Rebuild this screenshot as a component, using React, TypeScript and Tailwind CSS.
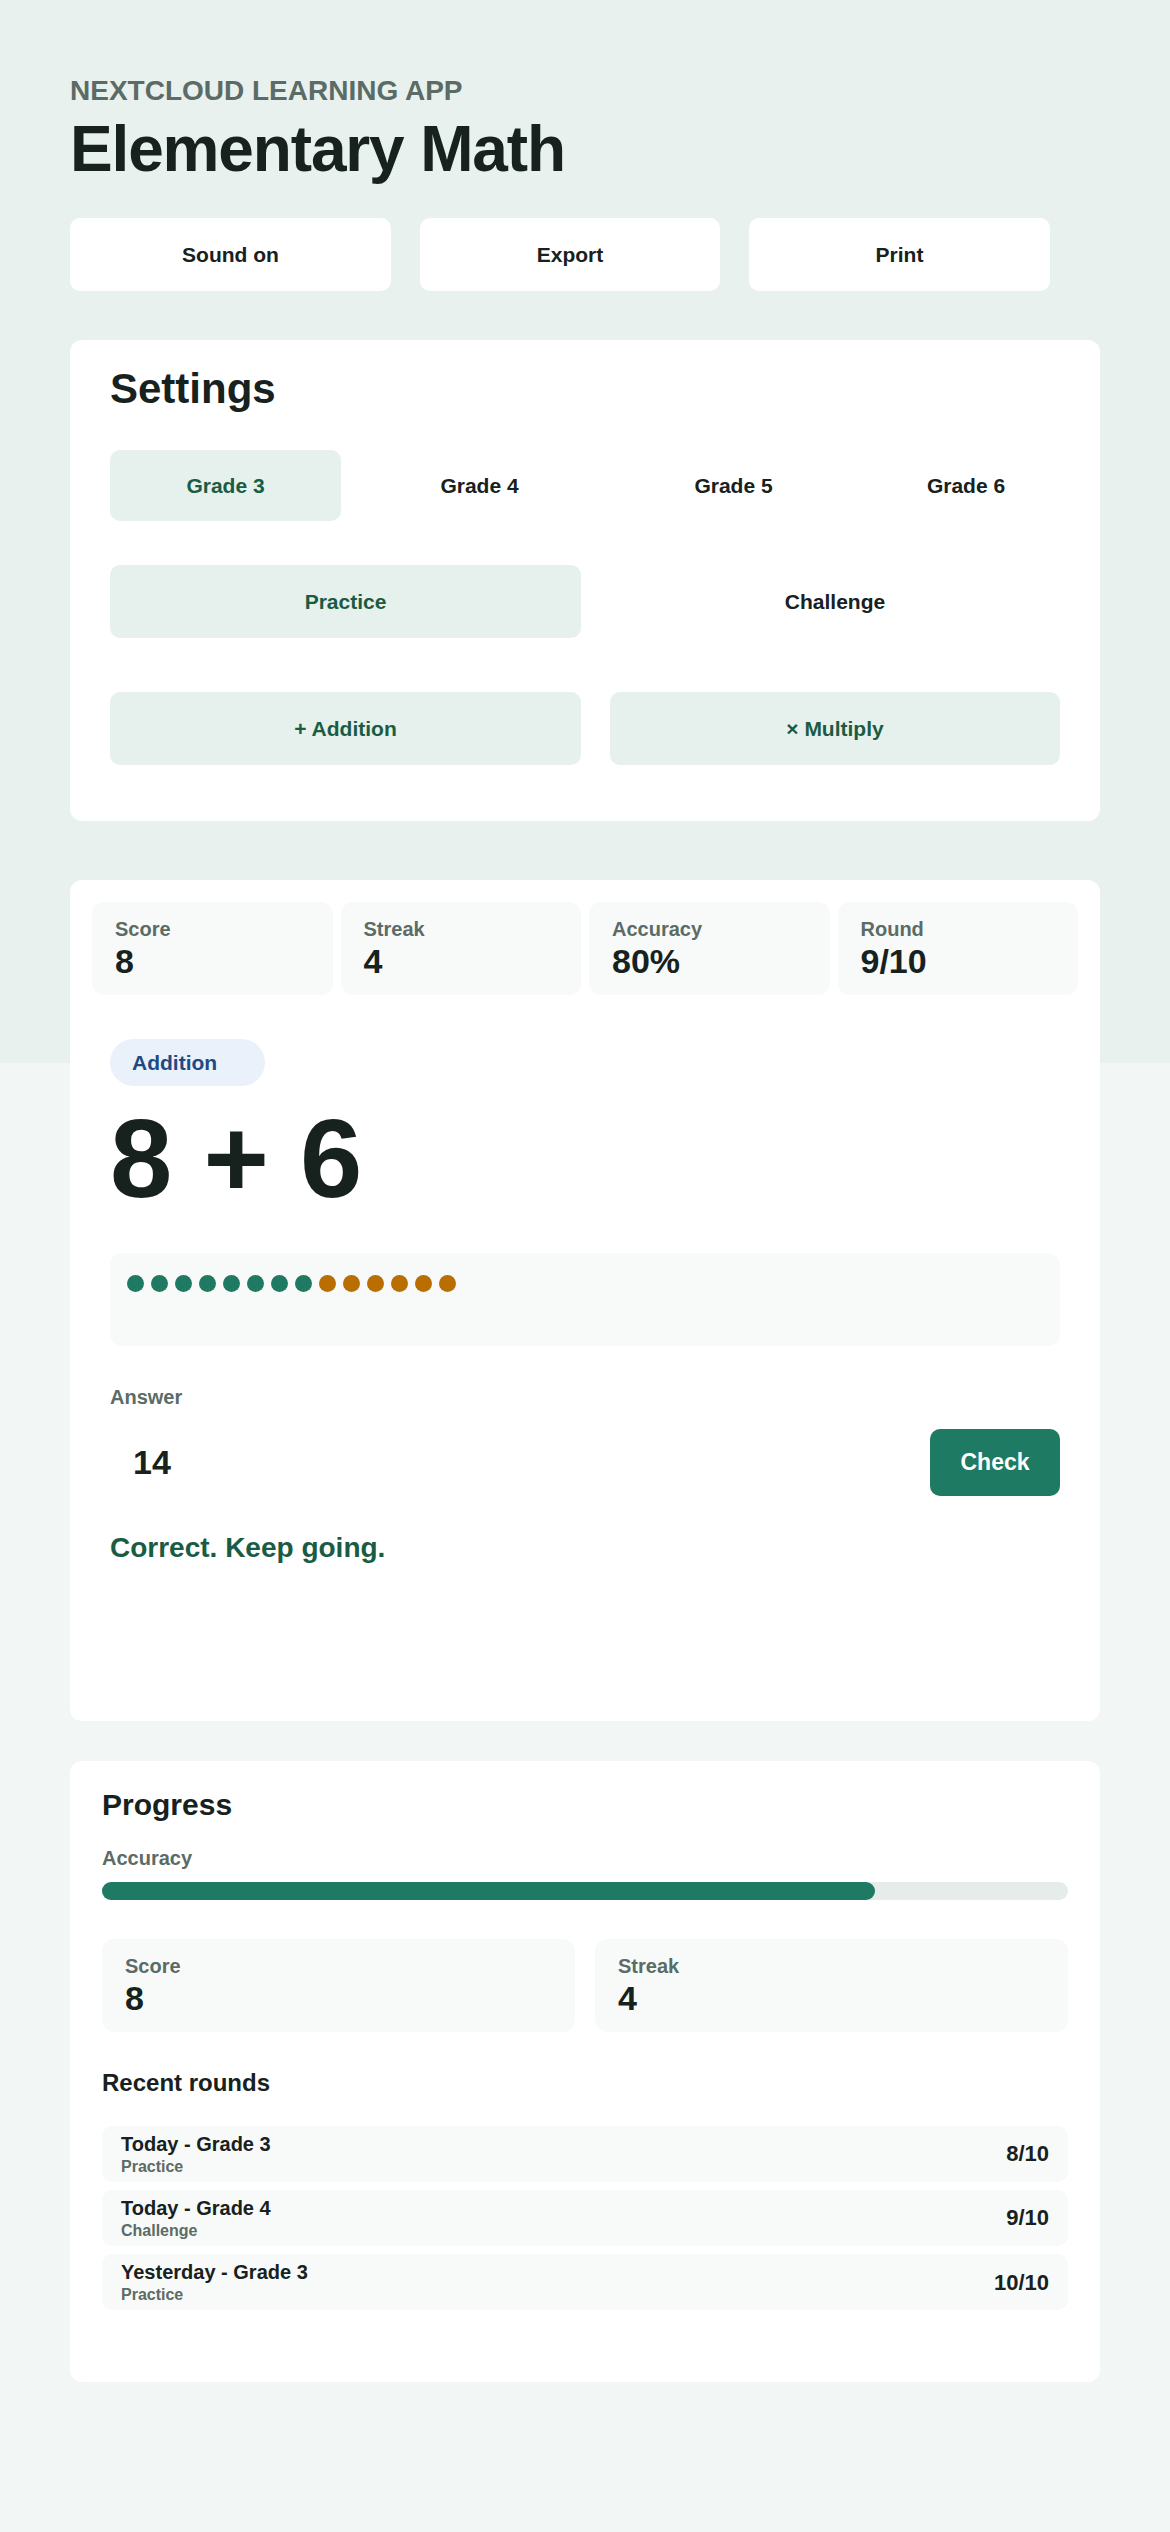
import React, { useState } from 'react';

type Round = { title: string; mode: string; score: string };

const grades = ['Grade 3', 'Grade 4', 'Grade 5', 'Grade 6'];

const recentRounds: Round[] = [
  { title: 'Today - Grade 3', mode: 'Practice', score: '8/10' },
  { title: 'Today - Grade 4', mode: 'Challenge', score: '9/10' },
  { title: 'Yesterday - Grade 3', mode: 'Practice', score: '10/10' },
];

// 8 answered right, 6 still to go
const dots = [...Array(8).fill('done'), ...Array(6).fill('todo')] as string[];

function StatTile({ label, value }: { label: string; value: string }) {
  return (
    <div className="rounded-xl bg-[#f8faf9] px-[23px] pt-[15px] pb-[14px]">
      <div className="text-[20px] font-bold leading-6 text-[#5b6b65]">{label}</div>
      <div className="mt-[2px] text-[34px] font-bold leading-[1.1] text-[#17211d]">{value}</div>
    </div>
  );
}

function ToggleButton({
  label,
  active,
  className = '',
  onClick,
}: {
  label: string;
  active: boolean;
  className?: string;
  onClick?: () => void;
}) {
  return (
    <button
      onClick={onClick}
      className={`rounded-[10px] text-[21px] font-bold ${
        active ? 'bg-[#e6f1ed] text-[#1a5c43]' : 'bg-white text-[#17211d]'
      } ${className}`}
    >
      {label}
    </button>
  );
}

function App() {
  const [grade, setGrade] = useState('Grade 3');
  const [mode, setMode] = useState('Practice');
  const [answer, setAnswer] = useState('14');
  const accuracy = 80;

  return (
    <div className="min-h-screen bg-[linear-gradient(to_bottom,#e8f1ee_0px,#e8f1ee_1063px,#f2f6f5_1063px)] px-[70px] pt-[74px] pb-[120px] font-['Liberation_Sans',Arial,sans-serif] text-[#17211d]">
      <header>
        <p className="text-[28px] font-bold leading-[1.2] text-[#5b6b65]">NEXTCLOUD LEARNING APP</p>
        <h1 className="mt-[6px] text-[64px] font-bold leading-[1.1] tracking-[-0.018em]">Elementary Math</h1>
        <div className="mt-[34px] flex gap-[29px]">
          <button className="h-[73px] w-[321px] rounded-[10px] bg-white text-[21px] font-bold">Sound on</button>
          <button className="h-[73px] w-[300px] rounded-[10px] bg-white text-[21px] font-bold">Export</button>
          <button className="h-[73px] w-[301px] rounded-[10px] bg-white text-[21px] font-bold">Print</button>
        </div>
      </header>

      <section className="mt-[49px] rounded-xl bg-white px-10 pt-[24px] pb-[56px]">
        <h2 className="text-[42px] font-bold leading-[1.2]">Settings</h2>
        <div className="mt-[36px] flex gap-[23px]">
          {grades.map((g, i) => (
            <ToggleButton
              key={g}
              label={g}
              active={grade === g}
              onClick={() => setGrade(g)}
              className={`h-[71px] ${i < 3 ? 'w-[231px]' : 'flex-1'}`}
            />
          ))}
        </div>
        <div className="mt-[44px] flex gap-[29px]">
          <ToggleButton label="Practice" active={mode === 'Practice'} onClick={() => setMode('Practice')} className="h-[73px] w-[471px]" />
          <ToggleButton label="Challenge" active={mode === 'Challenge'} onClick={() => setMode('Challenge')} className="h-[73px] flex-1" />
        </div>
        <div className="mt-[54px] flex gap-[29px]">
          <ToggleButton label="+ Addition" active className="h-[73px] w-[471px]" />
          <ToggleButton label="× Multiply" active className="h-[73px] flex-1" />
        </div>
      </section>

      <section className="mt-[59px] rounded-xl bg-white px-[22px] pt-[22px] pb-[157px]">
        <div className="grid grid-cols-4 gap-2">
          <StatTile label="Score" value="8" />
          <StatTile label="Streak" value="4" />
          <StatTile label="Accuracy" value={`${accuracy}%`} />
          <StatTile label="Round" value="9/10" />
        </div>

        <div className="px-[18px]">
          <span className="mt-[44px] flex h-[47px] w-[155px] items-center rounded-full bg-[#eaf1fa] px-[22px] text-[21px] font-bold text-[#1d4a85]">
            Addition
          </span>
          <div className="mt-[17px] text-[112px] font-bold leading-none">8 + 6</div>

          <div className="mt-[38px] h-[93px] rounded-xl bg-[#f8faf9] px-[17px] pt-[22px]">
            <div className="flex gap-[7px]">
              {dots.map((d, i) => (
                <span
                  key={i}
                  className={`h-[17px] w-[17px] rounded-full ${d === 'done' ? 'bg-[#1f7a63]' : 'bg-[#b86e00]'}`}
                />
              ))}
            </div>
          </div>

          <label className="mt-[39px] block text-[20px] font-bold leading-6 text-[#5b6b65]">Answer</label>
          <div className="mt-[20px] flex items-center">
            <input
              value={answer}
              onChange={(e) => setAnswer(e.target.value)}
              className="h-[67px] min-w-0 flex-1 bg-transparent px-[23px] text-[34px] font-bold text-[#17211d] outline-none"
            />
            <button className="h-[67px] w-[130px] rounded-[10px] bg-[#1f7a63] text-[23px] font-bold text-white">Check</button>
          </div>
          <p className="mt-[35px] text-[28px] font-bold leading-[1.2] text-[#1a5c43]">Correct. Keep going.</p>
        </div>
      </section>

      <section className="mt-[40px] rounded-xl bg-white px-8 pt-[26px] pb-[72px]">
        <h2 className="text-[30px] font-bold leading-[1.2]">Progress</h2>
        <div className="mt-[23px] text-[20px] font-bold leading-6 text-[#5b6b65]">Accuracy</div>
        <div className="mt-[12px] h-[18px] rounded-full bg-[#e5ecea]">
          <div className="h-full rounded-full bg-[#1f7a63]" style={{ width: `${accuracy}%` }} />
        </div>
        <div className="mt-[39px] grid grid-cols-2 gap-5">
          <StatTile label="Score" value="8" />
          <StatTile label="Streak" value="4" />
        </div>

        <h3 className="mt-[37px] text-[24px] font-bold leading-[1.2]">Recent rounds</h3>
        <ul className="mt-[28px] flex flex-col gap-2">
          {recentRounds.map((r) => (
            <li key={r.title} className="flex items-center justify-between rounded-[10px] bg-[#f8faf9] px-[19px] py-[6px]">
              <div>
                <div className="text-[20px] font-bold leading-6">{r.title}</div>
                <div className="mt-[1px] text-[16px] font-bold leading-[1.2] text-[#5b6b65]">{r.mode}</div>
              </div>
              <span className="text-[22px] font-bold">{r.score}</span>
            </li>
          ))}
        </ul>
      </section>
    </div>
  );
}

export default App;
